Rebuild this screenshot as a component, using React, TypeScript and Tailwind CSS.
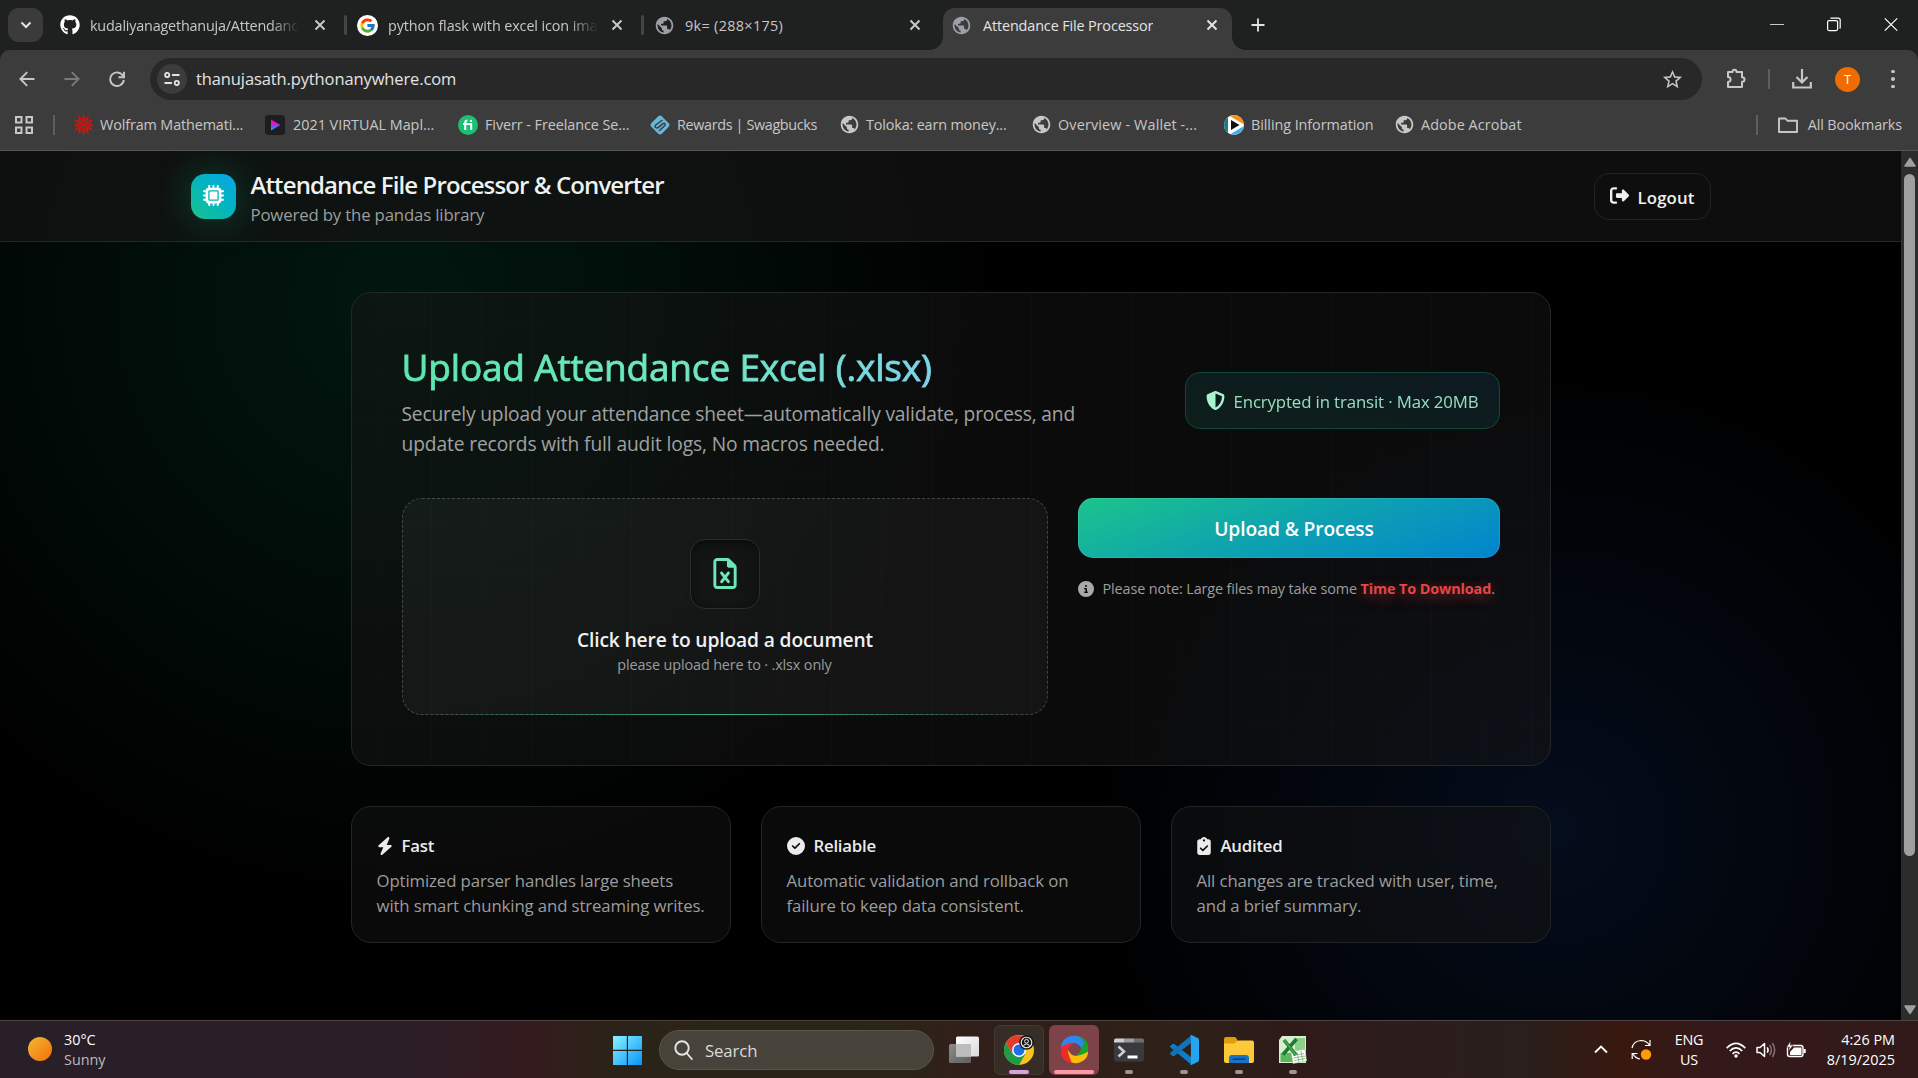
import type { ReactNode } from "react";
import {
  FaBolt,
  FaCircleCheck,
  FaCircleInfo,
  FaClipboardCheck,
  FaGithub,
  FaMicrochip,
  FaRegFileExcel,
  FaRightFromBracket,
  FaShieldHalved,
} from "react-icons/fa6";
import { FcGoogle } from "react-icons/fc";
import { MdPublic, MdStarOutline } from "react-icons/md";

/* ---------- Browser icons ---------- */

function CloseIcon({ className = "" }: { className?: string }) {
  return (
    <svg viewBox="0 0 16 16" className={`h-4 w-4 shrink-0 ${className}`} fill="none" stroke="currentColor" strokeWidth="2">
      <path d="M3.5 3.5l9 9M12.5 3.5l-9 9" />
    </svg>
  );
}

function Globe({ className = "" }: { className?: string }) {
  return <MdPublic className={`h-[21px] w-[21px] shrink-0 ${className}`} />;
}

function WolframIcon() {
  const spikes = Array.from({ length: 12 }, (_, i) => i * 30);
  return (
    <svg viewBox="-10 -11 20 22" className="h-[22px] w-[19px] shrink-0" fill="none" stroke="#d8150c">
      {spikes.map((a) => (
        <path key={a} d="M-1.8 -4 L0 -9.8 L1.8 -4" strokeWidth="1.1" transform={`rotate(${a})`} />
      ))}
      {[0, 60, 120, 180, 240, 300].map((a) => (
        <path key={a} d="M0 0 L0 -5" strokeWidth="1" transform={`rotate(${a})`} />
      ))}
      <circle r="3.6" strokeWidth="1" />
    </svg>
  );
}

function MapleIcon() {
  return (
    <svg viewBox="0 0 20 20" className="h-5 w-5 shrink-0">
      <defs>
        <linearGradient id="maple" x1="0" y1="0" x2="0" y2="1">
          <stop offset="0.25" stopColor="#f20db5" />
          <stop offset="0.6" stopColor="#7a4bf0" />
          <stop offset="1" stopColor="#13b4f5" />
        </linearGradient>
      </defs>
      <rect width="20" height="20" rx="3.5" fill="#1d1d20" />
      <path d="M6 4.6l9.4 5.4L6 15.4z" fill="url(#maple)" />
    </svg>
  );
}

function FiverrIcon() {
  return (
    <div className="flex h-5 w-5 shrink-0 items-center justify-center rounded-full bg-[#1dbf73]">
      <svg viewBox="0 0 12 12" className="h-3 w-3" fill="none" stroke="#fff" strokeWidth="2">
        <path d="M3.2 11V3.6Q3.2 1.6 5.4 1.6M1 5h8.2v6" />
        <circle cx="9" cy="1.9" r="1.2" fill="#fff" stroke="none" />
      </svg>
    </div>
  );
}

function SwagbucksIcon() {
  return (
    <svg viewBox="0 0 20 20" className="h-5 w-5 shrink-0">
      <path d="M10 0.5q1 0 2 1l6.500 6.500q2 2 0 4l-6.500 6.500q-2 2-4 0L1.500 12q-2-2 0-4L8 1.500q1-1 2-1z" fill="#66b7da" />
      <path d="M12.500 5L5.800 10q-1.500 1.500 0 2.500t3-.4l4-3.400q1.800-1 2.200.4t-1 2.200L9 16" fill="none" stroke="#3c3c3c" strokeWidth="1.500" />
    </svg>
  );
}

function BillingIcon() {
  return (
    <svg viewBox="0 0 20 20" className="h-5 w-5 shrink-0">
      <clipPath id="bill">
        <circle cx="10" cy="10" r="10" />
      </clipPath>
      <g clipPath="url(#bill)">
        <rect width="20" height="20" fill="#fff" />
        <path d="M0 0h4v20H0z" fill="#177b8c" />
        <path d="M4 0h16v9.500z" fill="#f7901e" />
        <path d="M5 20L20 11v9z" fill="#3fb1e8" />
        <path d="M7 5l8.500 5L7 15z" fill="#111" />
      </g>
    </svg>
  );
}

/* ---------- Browser chrome ---------- */

type TabProps = { icon: ReactNode; title: string; className: string; textClass: string; closeClass: string };

function Tab({ icon, title, className, textClass, closeClass }: TabProps) {
  return (
    <div className={`flex h-[34px] items-center ${className}`}>
      {icon}
      <span className={`overflow-hidden pt-px whitespace-nowrap text-[14.4px] ${textClass}`}>{title}</span>
      <CloseIcon className={`ml-auto ${closeClass}`} />
    </div>
  );
}

function TabStrip() {
  const fade = "[mask-image:linear-gradient(90deg,#000_86%,transparent)]";
  return (
    <div className="flex h-[50px] bg-[#1f2120] pt-2 pl-2 text-[#c7c7c7]">
      <div className="flex h-[34px] w-[35px] shrink-0 items-center justify-center rounded-[11px] bg-[#3b3b3b] text-[#e3e3e3]">
        <svg viewBox="0 0 12 8" className="h-2 w-3" fill="none" stroke="currentColor" strokeWidth="2">
          <path d="M1.500 1.500L6 6l4.500-4.500" />
        </svg>
      </div>
      <Tab
        icon={<FaGithub className="h-5 w-5 shrink-0 text-white" />}
        title="kudaliyanagethanuja/Attendanc"
        className="ml-[5px] w-[296px] pl-3"
        textClass={`ml-[10px] w-[210px] tracking-[-0.014em] ${fade}`}
        closeClass="mr-4"
      />
      <div className="mt-[7px] h-5 w-[3px] rounded-full bg-[#444645]" />
      <Tab
        icon={
          <div className="flex h-[21px] w-[21px] shrink-0 items-center justify-center rounded-full bg-white">
            <FcGoogle className="h-[17px] w-[17px]" />
          </div>
        }
        title="python flask with excel icon ima"
        className="w-[294px] pl-[10px]"
        textClass={`ml-[10px] w-[210px] tracking-[-0.008em] ${fade}`}
        closeClass="mr-4"
      />
      <div className="mt-[7px] h-5 w-[3px] rounded-full bg-[#444645]" />
      <Tab
        icon={<Globe className="text-[#9aa0a6]" />}
        title="9k= (288×175)"
        className="w-[299px] pl-[10px]"
        textClass="ml-[10px] tracking-[0.023em]"
        closeClass="mr-5"
      />
      <div className="relative h-[42px] w-[289px] rounded-t-[12px] bg-[#3c3c3c] text-[#e3e3e3]">
        <div className="absolute bottom-0 -left-[13px] h-[13px] w-[13px] bg-[radial-gradient(circle_at_0_0,transparent_12.500px,#3c3c3c_13px)]" />
        <div className="absolute -right-[13px] bottom-0 h-[13px] w-[13px] bg-[radial-gradient(circle_at_100%_0,transparent_12.500px,#3c3c3c_13px)]" />
        <Tab
          icon={<Globe className="text-[#9aa0a6]" />}
          title="Attendance File Processor"
          className="pl-[8px]"
          textClass="ml-[11px]"
          closeClass="mr-[12px]"
        />
      </div>
      <svg viewBox="0 0 14 14" className="mt-[10px] ml-[19px] h-[14px] w-[14px]" fill="none" stroke="#e3e3e3" strokeWidth="1.800">
        <path d="M7 .5v13M.5 7h13" />
      </svg>
      <div className="mt-2 mr-[20px] ml-auto flex gap-[43px] text-white">
        <svg viewBox="0 0 14 16" className="h-4 w-[14px]" stroke="#c8c8c8" strokeWidth="1">
          <path d="M0 8.500h14" />
        </svg>
        <svg viewBox="0 0 14 16" className="h-4 w-[14px]" fill="none" stroke="currentColor" strokeWidth="1.200">
          <rect x=".6" y="4.600" width="10" height="10" rx="1.500" />
          <path d="M3.500 2.600q0-.5.8-.5h6.900q2 0 2 2v7.500q0 .7-.6.9" />
        </svg>
        <svg viewBox="0 0 14 16" className="h-4 w-[14px]" fill="none" stroke="currentColor" strokeWidth="1.200">
          <path d="M.8 2.300l12.400 12.400M13.200 2.300L.8 14.700" />
        </svg>
      </div>
    </div>
  );
}

function AddressBar() {
  return (
    <div className="flex h-[58px] items-center text-[#c7c7c7]">
      <svg viewBox="0 0 16 16" className="ml-[19px] h-4 w-4" fill="none" stroke="currentColor" strokeWidth="1.900">
        <path d="M15.500 8H1.800M8.200 1.200L1.400 8l6.800 6.800" />
      </svg>
      <svg viewBox="0 0 16 16" className="ml-[29px] h-4 w-4 text-[#7a7a7a]" fill="none" stroke="currentColor" strokeWidth="1.900">
        <path d="M.5 8h13.700M7.800 1.200L14.600 8l-6.800 6.800" />
      </svg>
      <svg viewBox="0 0 16 16" className="ml-[29px] h-4 w-4" fill="none" stroke="currentColor" strokeWidth="1.900">
        <path d="M13.900 4.800A6.800 6.800 0 1 0 14.800 8.800M15 .8v5.400H9.500" />
      </svg>
      <div className="ml-[25px] flex h-[42px] w-[1552px] items-center rounded-full bg-[#282828] pl-[7px]">
        <div className="flex h-[30px] w-[30px] items-center justify-center rounded-full bg-[#3c3c3c]">
          <svg viewBox="0 0 16 14" className="h-[14px] w-4" fill="none" stroke="#e3e3e3" strokeWidth="1.900">
            <circle cx="3.200" cy="3" r="2.100" />
            <path d="M8 3h7.500M.5 11H8" />
            <circle cx="12.800" cy="11" r="2.100" />
          </svg>
        </div>
        <span className="ml-[9px] pt-px text-[16.500px] tracking-[-0.007em] text-[#e3e3e3]">thanujasath.pythonanywhere.com</span>
        <MdStarOutline className="mr-[18px] ml-auto h-[23px] w-[23px]" />
      </div>
      <svg viewBox="0 0 22 22" className="ml-[24px] h-[22px] w-[22px]" fill="none" stroke="currentColor" strokeWidth="2" strokeLinejoin="round">
        <path d="M2 4h4.500q0-2.200 2-2.200t2 2.200H16v5.300q2.500 0 2.500 2.200T16 13.700V19H2v-5q2.600-.3 2.600-2.500T2 9z" />
      </svg>
      <div className="ml-[20px] h-5 w-[2px] bg-[#5e5e5e]" />
      <svg viewBox="0 0 20 20" className="ml-[22px] h-5 w-5" fill="none" stroke="currentColor" strokeWidth="2.200">
        <path d="M10 0v13M4.500 8l5.500 5.500L15.500 8M1.200 13v5.500h17.600V13" />
      </svg>
      <div className="ml-[23px] flex h-[25px] w-[25px] items-center justify-center rounded-full bg-[#ef6c00] text-[13px] leading-none text-white">T</div>
      <div className="ml-[31px] flex flex-col gap-[4px]">
        <i className="h-[3.500px] w-[3.500px] rounded-full bg-[#c7c7c7]" />
        <i className="h-[3.500px] w-[3.500px] rounded-full bg-[#c7c7c7]" />
        <i className="h-[3.500px] w-[3.500px] rounded-full bg-[#c7c7c7]" />
      </div>
    </div>
  );
}

const bookmarks: { icon: ReactNode; label: string; className: string }[] = [
  { icon: <WolframIcon />, label: "Wolfram Mathemati...", className: "w-[191px] gap-[7px]" },
  { icon: <MapleIcon />, label: "2021 VIRTUAL Mapl...", className: "w-[193px] gap-[8px] tracking-[-0.001em]" },
  { icon: <FiverrIcon />, label: "Fiverr - Freelance Se...", className: "w-[192px] gap-[7px] tracking-[-0.005em]" },
  { icon: <SwagbucksIcon />, label: "Rewards | Swagbucks", className: "w-[189px] gap-[7px] tracking-[-0.025em]" },
  { icon: <Globe />, label: "Toloka: earn money...", className: "w-[192px] gap-[6px] tracking-[-0.011em]" },
  { icon: <Globe />, label: "Overview - Wallet -...", className: "w-[193px] gap-[6px] tracking-[0.010em]" },
  { icon: <BillingIcon />, label: "Billing Information", className: "w-[170px] gap-[7px] tracking-[-0.005em]" },
  { icon: <Globe />, label: "Adobe Acrobat", className: "w-[130px] gap-[6px] tracking-[0.005em]" },
];

function BookmarksBar() {
  return (
    <div className="flex h-[42px] items-center pb-[8px] text-[14.400px] whitespace-nowrap text-[#c7c7c7]">
      <svg viewBox="0 0 18 18" className="ml-[15px] h-[18px] w-[18px]" fill="none" stroke="currentColor" strokeWidth="2">
        <path d="M1 1h5.500v5.500H1zM11.500 1H17v5.500h-5.500zM1 11.500h5.500V17H1zM11.500 11.500H17V17h-5.500z" />
      </svg>
      <div className="mr-[19px] ml-[20px] h-5 w-[2px] bg-[#5e5e5e]" />
      {bookmarks.map((b) => (
        <div key={b.label} className={`flex shrink-0 items-center ${b.className}`}>
          {b.icon}
          <span>{b.label}</span>
        </div>
      ))}
      <div className="ml-auto h-5 w-[2px] bg-[#5e5e5e]" />
      <svg viewBox="0 0 20 16" className="ml-[20px] h-4 w-5" fill="none" stroke="currentColor" strokeWidth="1.900" strokeLinejoin="round">
        <path d="M1 1.500h6.500l2 2.300H19V15H1z" />
      </svg>
      <span className="mr-[16px] ml-[10px]">All Bookmarks</span>
    </div>
  );
}

/* ---------- Web page ---------- */

function Header() {
  return (
    <header className="h-[91px] border-b border-[#262827] bg-[#141414]/70">
      <div className="mx-auto flex w-[1520px] items-start">
        <div className="mt-[23px] flex h-[45px] w-[45px] items-center justify-center rounded-[14px] bg-linear-to-tr from-[#1cc28a] to-[#0ea5e9] text-white shadow-[0_0_38px_rgba(16,185,129,0.32)]">
          <FaMicrochip className="mb-[2px] h-[21px] w-[21px]" />
        </div>
        <div className="mt-[19px] ml-[15px]">
          <h1 className="text-[24px] leading-[30px] font-semibold tracking-[-0.037em] text-white/95">Attendance File Processor &amp; Converter</h1>
          <p className="mt-[2px] text-[16.800px] leading-[25px] tracking-[-0.010em] text-[#9c9e9d]">Powered by the pandas library</p>
        </div>
        <button className="mt-[22px] ml-auto flex h-[47px] w-[117px] items-center rounded-[15px] border border-[#232323] pl-[15px] text-[16.800px] font-semibold text-[#f0f0f0]">
          <FaRightFromBracket className="mr-[9px] mb-[3px] h-[19px] w-[19px]" />
          <span className="pt-[2px] tracking-[0.008em]">Logout</span>
        </button>
      </div>
    </header>
  );
}

function DropZone() {
  return (
    <div className="relative flex h-[217px] w-[646px] flex-col items-center rounded-[20px] border border-dashed border-white/20 bg-white/[0.04]">
      <div className="mt-[40px] flex h-[70px] w-[70px] items-center justify-center rounded-[15px] border border-[#2b2c2c] bg-[#131414] shadow-[inset_0_3px_8px_rgba(0,0,0,0.5)]">
        <FaRegFileExcel className="mb-[2px] h-[31px] w-[24px] text-[#6ee7b7]" />
      </div>
      <div className="mt-[17px] pl-px text-[19.200px] leading-[28px] font-semibold text-[#f0f1f1]">Click here to upload a document</div>
      <div className="mt-[1px] text-[14.400px] leading-5 text-[#9b9c9c]">please upload here to · .xlsx only</div>
      <div className="absolute inset-x-0 -bottom-px mx-4 h-[1px] bg-linear-to-r from-transparent via-[#34b287] to-transparent" />
    </div>
  );
}

function UploadCard() {
  return (
    <section className="mt-[50px] h-[474px] rounded-[20px] border border-[#242726] bg-[#161616]/50 bg-[linear-gradient(rgba(255,255,255,0.009)_1px,transparent_1px),linear-gradient(90deg,rgba(255,255,255,0.011)_1px,transparent_1px)] bg-[size:50px_50px] bg-[position:29px_30px] px-[50px] pt-[49px]">
      <div className="flex justify-between">
        <div>
          <h2 className="w-fit bg-linear-to-r from-[#5de6ae] via-[#6fe8bd] to-[#7dd3e8] bg-clip-text text-[37px] leading-[50px] font-medium tracking-[-0.005em] text-transparent [-webkit-text-stroke:0.900px_transparent]">
            Upload Attendance Excel (.xlsx)
          </h2>
          <p className="mt-[7px] text-[19.200px] leading-[30px] whitespace-nowrap tracking-[-0.009em] text-[#a0a2a1]">
            Securely upload your attendance sheet—automatically validate, process, and
            <br />
            <span className="tracking-[-0.006em]">update records with full audit logs, No macros needed.</span>
          </p>
        </div>
        <div className="mt-[30px] flex h-[57px] w-[315px] items-center rounded-[15px] border border-[#10473a] bg-linear-to-tr from-[#0d1f19] to-[#0d1a22] pl-[20px] text-[16.800px] text-[#a7f3d0]">
          <FaShieldHalved className="mr-[9px] h-[19px] w-[19px]" />
          <span className="pt-[2px] tracking-[-0.007em] opacity-90">Encrypted in transit · Max 20MB</span>
        </div>
      </div>
      <div className="mt-[39px] flex justify-between">
        <DropZone />
        <div className="w-[422px]">
          <button className="h-[60px] w-full rounded-[15px] border border-white/10 bg-linear-[160deg] from-[#1bc48b] via-[#0ea2b0] to-[#0284cf] bg-origin-border pt-[2px] pl-[11px] text-[19.200px] font-semibold text-white">
            Upload &amp; Process
          </button>
          <div className="mt-[21px] flex items-center text-[14.400px] leading-5 whitespace-nowrap text-[#9d9e9f]">
            <FaCircleInfo className="mr-[9px] mb-px h-4 w-4 text-[#a9a9aa]" />
            <span className="tracking-[-0.008em]">
              Please note: Large files may take some{" "}
              <strong className="font-bold text-[#e64545] [text-shadow:0_3px_13px_rgba(239,68,68,0.6)]">Time To Download</strong>.
            </span>
          </div>
        </div>
      </div>
    </section>
  );
}

const features: { icon: ReactNode; title: string; lines: [string, string] }[] = [
  {
    icon: <FaBolt className="mr-[9px] h-[18px] w-[16px]" />,
    title: "Fast",
    lines: ["Optimized parser handles large sheets", "with smart chunking and streaming writes."],
  },
  {
    icon: <FaCircleCheck className="mr-[9px] h-[18px] w-[18px]" />,
    title: "Reliable",
    lines: ["Automatic validation and rollback on", "failure to keep data consistent."],
  },
  {
    icon: <FaClipboardCheck className="mr-[10px] h-[18px] w-[14px]" />,
    title: "Audited",
    lines: ["All changes are tracked with user, time,", "and a brief summary."],
  },
];

function Features() {
  return (
    <div className="mt-[40px] grid grid-cols-3 gap-[30px]">
      {features.map((f) => (
        <article key={f.title} className="h-[137px] rounded-[20px] border border-[#232425] bg-[#141414]/50 pt-[25px] pl-[25px] text-[16.800px]">
          <h3 className="flex items-center leading-[27px] font-semibold text-[#ebebeb]">
            {f.icon}
            <span className="tracking-[-0.014em]">{f.title}</span>
          </h3>
          <p className="mt-[9px] leading-[25px] whitespace-nowrap tracking-[-0.007em] text-[#9c9d9e]">
            {f.lines[0]}
            <br />
            {f.lines[1]}
          </p>
        </article>
      ))}
    </div>
  );
}

function Scrollbar() {
  return (
    <div className="flex w-[17px] flex-col items-center bg-[#2c2c2c]">
      <svg viewBox="0 0 12 10" className="mt-[6px] h-[10px] w-3" fill="#9f9f9f" stroke="#9f9f9f" strokeWidth="1.500" strokeLinejoin="round">
        <path d="M6 1.500L11 9H1z" />
      </svg>
      <div className="mt-[7px] h-[682px] w-[11px] rounded-full bg-[#9f9f9f]" />
      <svg viewBox="0 0 12 10" className="mt-auto mb-[5px] h-[10px] w-3" fill="#9f9f9f" stroke="#9f9f9f" strokeWidth="1.500" strokeLinejoin="round">
        <path d="M6 8.500L1 1h10z" />
      </svg>
    </div>
  );
}

function WebPage() {
  return (
    <div className="flex h-[869px]">
      <div className="flex-1 overflow-hidden bg-black bg-[radial-gradient(circle_600px_at_400px_150px,rgba(16,185,129,0.12),rgba(16,185,129,0.085)_35%,transparent),radial-gradient(circle_470px_at_1555px_680px,rgba(40,110,235,0.12),rgba(40,110,235,0.075)_35%,transparent)]">
        <Header />
        <main className="mx-auto w-[1200px]">
          <UploadCard />
          <Features />
        </main>
      </div>
      <Scrollbar />
    </div>
  );
}

/* ---------- Taskbar ---------- */

function WindowsLogo() {
  return (
    <svg viewBox="0 0 29 29" className="h-[29px] w-[29px]">
      <defs>
        <linearGradient id="win" x1="0" y1="0" x2="1" y2="1">
          <stop offset="0" stopColor="#86f4ff" />
          <stop offset="1" stopColor="#0a94fb" />
        </linearGradient>
      </defs>
      <path d="M0 0h13.800v13.800H0zM15 0h14v13.800H15zM0 15h13.800v14H0zM15 15h14v14H15z" fill="url(#win)" />
    </svg>
  );
}

function TaskViewIcon() {
  return (
    <svg viewBox="0 0 30 28" className="h-7 w-[30px]">
      <defs>
        <linearGradient id="tv1" x1="0" y1="0" x2="1" y2="1">
          <stop offset="0" stopColor="#ffffff" />
          <stop offset="1" stopColor="#d9d9d9" />
        </linearGradient>
        <linearGradient id="tv2" x1="0" y1="0" x2="1" y2="1">
          <stop offset="0" stopColor="#8b8b8b" />
          <stop offset="1" stopColor="#5e5e5e" />
        </linearGradient>
      </defs>
      <rect x="0" y="8" width="22" height="19" rx="1.500" fill="url(#tv2)" />
      <rect x="7" y="0.500" width="23" height="20" rx="1.500" fill="url(#tv1)" />
      <rect x="7" y="8" width="15" height="12.500" fill="#bdbdbd" />
    </svg>
  );
}

function ChromeIcon() {
  return (
    <svg viewBox="0 0 30 30" className="h-[30px] w-[30px]">
      <circle cx="15" cy="15" r="15" fill="#fcc31e" />
      <path d="M2 7.500A15 15 0 0 0 15 30L21.500 18.700 15 15 8.500 18.700z" fill="#219a4a" />
      <path d="M2 7.500L8.500 18.700 15 8h13A15 15 0 0 0 2 7.500z" fill="#e33b2e" />
      <circle cx="15" cy="15" r="7" fill="#fff" />
      <circle cx="15" cy="15" r="5.500" fill="#1b6ee8" />
      <circle cx="22.500" cy="7.500" r="7.300" fill="#191919" />
      <circle cx="22.500" cy="7.500" r="5.300" fill="none" stroke="#e8e8e8" strokeWidth="1.100" />
      <circle cx="22.500" cy="6.300" r="1.900" fill="none" stroke="#e8e8e8" strokeWidth="1" />
      <path d="M19.600 11.200q0-2.200 2.900-2.200t2.900 2.200" fill="none" stroke="#e8e8e8" strokeWidth="1" />
    </svg>
  );
}

function SwirlIcon() {
  return (
    <svg viewBox="0 0 30 30" className="h-[29px] w-[29px]">
      <path d="M18 1C26 2 31 9 28.500 18 26.500 25 19 26 14 22c7-2 9-8 7-12-.5-4-3-6-3-9z" fill="#12a62c" />
      <path d="M29 17C29.500 26 20 31 12 28.500 5 26 4 19 8 14c2 7 8 9 12 7 4-1 7-3 9-4z" fill="#fbbd09" />
      <path d="M12 29C4 28 -1 21 1.500 12 3.500 5 11 4 16 8c-7 2-9 8-7 12 .5 4 3 6 3 9z" fill="#ee2b2c" />
      <path d="M1 13C1 4 10-1 18 1.200c6 1.800 9 7.800 3.700 12.300C20 9 14.500 7 10 8.500 6 9.500 3 11 1 13z" fill="#2f86ef" />
    </svg>
  );
}

function TerminalIcon() {
  return (
    <svg viewBox="0 0 30 24" className="h-6 w-[30px]">
      <rect width="30" height="23" y=".5" rx="2" fill="#3a3a3c" />
      <path d="M2 .5h8.500v4H0v-2q0-2 2-2z" fill="#cfcfcf" />
      <path d="M10.500.5h9.500v4h-9.500z" fill="#9d9d9f" />
      <path d="M20 .5h8q2 0 2 2v2H20z" fill="#6f6f71" />
      <path d="M4.500 8.500l5.500 5-5.500 5" fill="none" stroke="#cfcfcf" strokeWidth="2.600" />
      <path d="M13.500 17.500h10v3h-10z" fill="#fff" />
    </svg>
  );
}

function VsCodeIcon() {
  return (
    <svg viewBox="0 0 30 30" className="h-[30px] w-[30px]">
      <path d="M1.300 10.700L3.600 9q.8-.6 1.600 0L22 22v7.500L1.300 12.200q-.8-.8 0-1.500z" fill="#0e7dc6" />
      <path d="M1.300 19.300L3.600 21q.8.600 1.600 0L22 8V.5L1.300 17.800q-.8.800 0 1.500z" fill="#1072b8" />
      <path d="M21 .4q.9-.6 1.900-.1l5.800 2.800q1.300.6 1.300 2v19.800q0 1.400-1.300 2l-5.800 2.800q-1 .5-1.900-.3.9.2.9-1V1.500q0-1.100-.9-1.100z" fill="#25a4f2" />
    </svg>
  );
}

function FolderIcon() {
  return (
    <svg viewBox="0 0 30 28" className="h-[28px] w-[30px]">
      <path d="M0 3q0-2 2-2h8q1.500 0 2.300 1.200L14 5v6H0z" fill="#e09c0b" />
      <path d="M0 7.500h9q2 0 3-1.500t3-1.500h13q2 0 2 2V25q0 2-2 2H2q-2 0-2-2z" fill="#fdc938" />
      <path d="M5 27v-5q0-3 3-3h14q3 0 3 3v5z" fill="#1673c9" />
      <path d="M9.500 23.200h11" stroke="#0a4486" strokeWidth="1.800" strokeLinecap="round" />
    </svg>
  );
}

function ExcelIcon() {
  return (
    <svg viewBox="0 0 28 28" className="h-7 w-7">
      <path d="M3 0h24v27H0V4z" fill="#d7efcf" />
      <path d="M16 2h10v12H16z" fill="#8ccf86" />
      <path d="M1.500 17h14v9h-14z" fill="#5bb75b" />
      <path d="M12 16l14-3 1.500 12L14 27.500z" fill="#fff" stroke="#9cc59a" strokeWidth=".7" />
      <path d="M14 19.500l11-2M14.500 22l11.500-2M15 24.500l11-2M18 16l2 10M22 15l2 10" stroke="#77ad76" strokeWidth=".8" />
      <path d="M5 4l12 15M17.500 3L4 18.500" stroke="#1f7a34" strokeWidth="3.600" />
      <path d="M5 4l12 15" stroke="#4fae4a" strokeWidth="1.400" />
    </svg>
  );
}

function TaskbarApp({ icon, className = "" }: { icon: ReactNode; className?: string }) {
  return (
    <div className={`flex flex-col items-center ${className}`}>
      <div className="flex h-[49px] items-center justify-center pt-[9px]">{icon}</div>
      <div className="h-[4px] w-2 rounded-full bg-[#9c9590]" />
    </div>
  );
}

function Taskbar() {
  return (
    <div className="flex h-[58px] items-start border-t border-[#4d4343] bg-[linear-gradient(90deg,#281f28_0px,#2b1d27_400px,#341b1e_530px,#2b2219_600px,#2a2416_700px,#2b2417_900px,#31201a_960px,#301d1a_1030px,#2d2119_1180px,#2e1b18_1280px,#2e1c1d_1360px,#291f1c_1520px,#38190f_1620px,#34191a_1700px,#32191a_1918px)] text-white">
      <div className="mt-[16px] ml-[28px] h-[24px] w-[24px] rounded-full bg-linear-to-br from-[#f0b92e] to-[#f26c0c]" />
      <div className="mt-[9px] ml-[12px] w-[120px] text-[14.400px] leading-5 tracking-normal">
        <div>30°C</div>
        <div className="text-[#c0b9bf]">Sunny</div>
      </div>
      <div className="mt-[15px] ml-[429px]">
        <WindowsLogo />
      </div>
      <div className="mt-[9px] ml-[17px] flex h-[40px] w-[275px] items-center rounded-full border border-[#5a5648] bg-[#47423a] pl-[14px]">
        <svg viewBox="0 0 19 20" className="h-5 w-[19px]" fill="none" stroke="#e6e6e6" strokeWidth="1.900">
          <circle cx="8" cy="8" r="6.700" />
          <path d="M12.600 13l5.200 6" strokeLinecap="round" />
        </svg>
        <span className="ml-[12px] pt-[2px] text-[16.800px] text-[#dcdad7]">Search</span>
      </div>
      <div className="mt-[15px] ml-[15px]">
        <TaskViewIcon />
      </div>
      <div className="mt-1 ml-[15px] flex h-[50px] w-[50px] flex-col items-center rounded-[6px] border border-[#423a31] bg-[#352d26]">
        <div className="mt-[9px]">
          <ChromeIcon />
        </div>
        <div className="mt-auto h-[4px] w-5 rounded-full bg-[#d9a0e0]" />
      </div>
      <div className="mt-1 ml-[5px] flex h-[50px] w-[50px] flex-col items-center rounded-[6px] bg-[#7e4249]">
        <div className="mt-[10px]">
          <SwirlIcon />
        </div>
        <div className="mt-auto mb-[1px] h-[4px] w-[40px] rounded-full bg-[#ff98a4]" />
      </div>
      <TaskbarApp icon={<TerminalIcon />} className="ml-[15px] w-[30px]" />
      <TaskbarApp icon={<VsCodeIcon />} className="ml-[25px] w-[30px]" />
      <TaskbarApp icon={<FolderIcon />} className="ml-[25px] w-[30px]" />
      <TaskbarApp icon={<ExcelIcon />} className="ml-[25px] w-[28px]" />
      <div className="mr-[23px] ml-auto flex h-full items-center text-[14.400px] leading-5 tracking-normal">
        <svg viewBox="0 0 14 9" className="h-[9px] w-[14px]" fill="none" stroke="#fff" strokeWidth="1.800">
          <path d="M1 7.500l6-6 6 6" />
        </svg>
        <svg viewBox="0 0 21 22" className="ml-[23px] h-[22px] w-[21px]" fill="none" stroke="#fff" strokeWidth="1.200">
          <path d="M1 9Q2.500 2 10 1.500q5.500 0 8.500 4.800M19 1v5.500h-5M9 20q-5-.8-7-5.500M1.200 20v-5.500h5.300" />
          <circle cx="15" cy="15.500" r="5.200" fill="#ff9a00" stroke="none" />
        </svg>
        <div className="ml-[21px] w-[32px] text-center tracking-[-0.02em]">
          <div>ENG</div>
          <div>US</div>
        </div>
        <svg viewBox="0 0 20 16" className="ml-[21px] h-4 w-5" fill="none" stroke="#fff" strokeWidth="1.700">
          <path d="M.7 6.200Q10-3.400 19.300 6.200M3.700 9Q10 2.600 16.300 9M6.600 11.800Q10 8.200 13.400 11.800" />
          <circle cx="10" cy="14" r="1.700" fill="#fff" stroke="none" />
        </svg>
        <svg viewBox="0 0 20 18" className="ml-[10px] h-[18px] w-5" fill="none" stroke="#fff" strokeWidth="1.500">
          <path d="M1 6.500h3L8.500 2.500v13L4 11.500H1z" strokeLinejoin="round" />
          <path d="M11.200 6.300q1.800 2.700 0 5.400" />
          <path d="M13.600 4q3.600 5 0 10M16.400 2q4.600 7 0 14" stroke="#8a6d6c" />
        </svg>
        <svg viewBox="0 0 20 18" className="ml-[10px] h-[18px] w-5" fill="none" stroke="#fff" strokeWidth="1.400">
          <rect x="1.500" y="4.500" width="15.500" height="11" rx="2.200" />
          <path d="M4 14v-3l4-4.500h7.500V14H4z" fill="#fff" stroke="none" />
          <path d="M18.700 8v4" strokeWidth="2" />
          <path d="M4.500 0L.8 6h2.600l-1 4.500L7 4.300H4.200z" fill="#fff" stroke="#34191a" strokeWidth=".5" />
        </svg>
        <div className="ml-[18px] w-[71px] text-right whitespace-nowrap">
          <div>4:26 PM</div>
          <div>8/19/2025</div>
        </div>
      </div>
    </div>
  );
}

export default function App() {
  return (
    <div className="flex h-[1078px] w-[1918px] flex-col overflow-hidden bg-[#1f2120] font-['Open_Sans','Noto_Sans',sans-serif] tracking-[-0.008em]">
      <TabStrip />
      <div className="h-[101px] rounded-t-[10px] border-b border-[#545454] bg-[#3c3c3c]">
        <AddressBar />
        <BookmarksBar />
      </div>
      <WebPage />
      <Taskbar />
    </div>
  );
}
